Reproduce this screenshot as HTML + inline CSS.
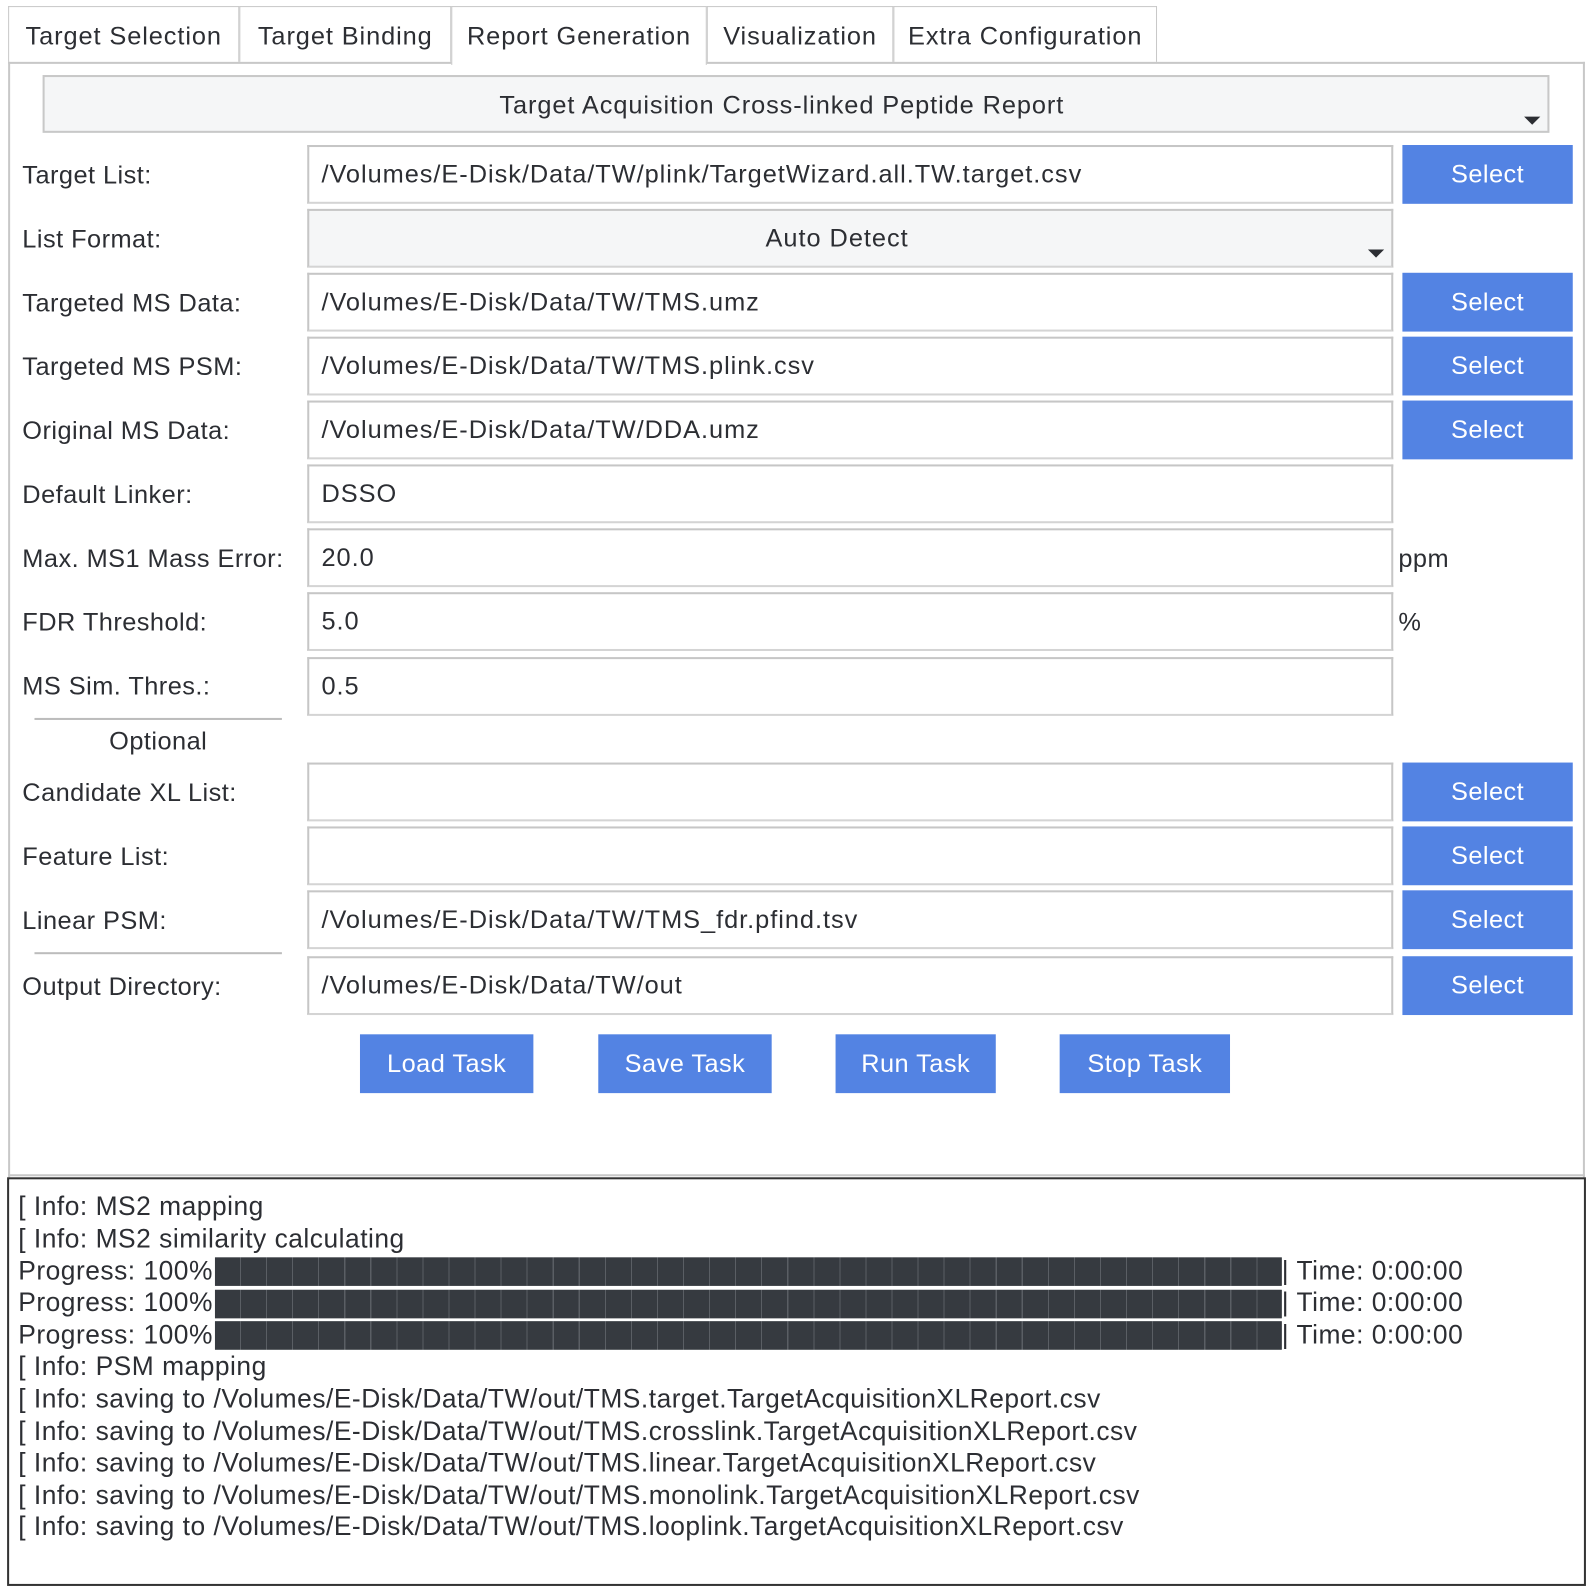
<!DOCTYPE html>
<html><head><meta charset="utf-8"><style>
html,body{margin:0;padding:0;background:#fff;width:1590px;height:1590px;overflow:hidden}
#w{position:absolute;left:0;top:0;width:1568px;height:1568px;transform:scale(1.01403);transform-origin:0 0;font-family:"Liberation Sans",sans-serif;color:#2c2e33;letter-spacing:0.45px}
.a{position:absolute}
.tab{position:absolute;top:6px;height:55px;border:1.5px solid #c8c8c8;border-bottom:none;background:#fff;font-size:25px;line-height:58px;text-align:center;box-sizing:border-box;letter-spacing:0.9px}
.lbl{position:absolute;left:22px;font-size:25px;line-height:30px}
.inp{position:absolute;left:303px;width:1071px;height:58px;box-sizing:border-box;border:2px solid #c6c6c6;border-bottom-color:#d4d4d4;background:#fff;font-size:25px;line-height:54px;padding-left:12px;letter-spacing:0.95px}
.btn{position:absolute;background:#5383e3;color:#fff;font-size:25px;text-align:center;height:58px;line-height:58px}
.sel{left:1383px;width:168px}
.arr{position:absolute;width:0;height:0;border-left:8px solid transparent;border-right:8px solid transparent;border-top:8px solid #2c2e33}
.lg{position:absolute;left:18px;font-size:26px;line-height:31.6px;white-space:pre;letter-spacing:0.5px}
.bar{position:absolute;left:212px;width:1052px;height:28px;background:#363a40;background-image:repeating-linear-gradient(90deg,#363a40 0,#363a40 24.6px,#5a5e64 24.6px,#5a5e64 25.7px)}
</style></head><body><div id="w">
<div class="tab" style="left:8px;width:228px">Target Selection</div>
<div class="tab" style="left:236px;width:209px">Target Binding</div>
<div class="tab" style="left:445px;width:252px;height:58px">Report Generation</div>
<div class="tab" style="left:697px;width:184px">Visualization</div>
<div class="tab" style="left:881px;width:260px">Extra Configuration</div>
<div class="a" style="left:8px;top:61px;width:437px;height:1.5px;background:#c8c8c8"></div>
<div class="a" style="left:697px;top:61px;width:866px;height:1.5px;background:#c8c8c8"></div>
<div class="a" style="left:8px;top:61px;width:1.5px;height:1100px;background:#c8c8c8"></div>
<div class="a" style="left:1561px;top:61px;width:1.5px;height:1100px;background:#c8c8c8"></div>
<div class="a" style="left:8px;top:1158px;width:1555px;height:2px;background:#c8c8c8"></div>

<div class="a" style="left:42px;top:74px;width:1486px;height:57px;box-sizing:border-box;border:2px solid #c8c8c8;background:#f5f6f7;font-size:25px;line-height:56px;text-align:center;letter-spacing:0.9px;padding-right:28px">Target Acquisition Cross-linked Peptide Report</div>
<div class="arr" style="left:1503px;top:115px"></div>

<div class="lbl" style="top:158px">Target List:</div>
<div class="inp" style="top:143px">/Volumes/E-Disk/Data/TW/plink/TargetWizard.all.TW.target.csv</div>
<div class="btn sel" style="top:143px">Select</div>

<div class="lbl" style="top:221px">List Format:</div>
<div class="inp" style="top:206px;background:#f5f6f7;text-align:center;padding:0 26px 0 0">Auto Detect</div>
<div class="arr" style="left:1349px;top:246px"></div>

<div class="lbl" style="top:284px">Targeted MS Data:</div>
<div class="inp" style="top:269px">/Volumes/E-Disk/Data/TW/TMS.umz</div>
<div class="btn sel" style="top:269px">Select</div>

<div class="lbl" style="top:347px">Targeted MS PSM:</div>
<div class="inp" style="top:332px">/Volumes/E-Disk/Data/TW/TMS.plink.csv</div>
<div class="btn sel" style="top:332px">Select</div>

<div class="lbl" style="top:410px">Original MS Data:</div>
<div class="inp" style="top:395px">/Volumes/E-Disk/Data/TW/DDA.umz</div>
<div class="btn sel" style="top:395px">Select</div>

<div class="lbl" style="top:473px">Default Linker:</div>
<div class="inp" style="top:458px">DSSO</div>

<div class="lbl" style="top:536px">Max. MS1 Mass Error:</div>
<div class="inp" style="top:521px">20.0</div>
<div class="lbl" style="left:1379px;top:536px">ppm</div>

<div class="lbl" style="top:599px">FDR Threshold:</div>
<div class="inp" style="top:584px">5.0</div>
<div class="lbl" style="left:1379px;top:599px">%</div>

<div class="lbl" style="top:662px">MS Sim. Thres.:</div>
<div class="inp" style="top:648px">0.5</div>

<div class="a" style="left:34px;top:708px;width:244px;height:1.5px;background:#bcbcbc"></div>
<div class="lbl" style="left:34px;width:244px;text-align:center;top:716px">Optional</div>

<div class="lbl" style="top:767px">Candidate XL List:</div>
<div class="inp" style="top:752px"></div>
<div class="btn sel" style="top:752px">Select</div>

<div class="lbl" style="top:830px">Feature List:</div>
<div class="inp" style="top:815px"></div>
<div class="btn sel" style="top:815px">Select</div>

<div class="lbl" style="top:893px">Linear PSM:</div>
<div class="inp" style="top:878px">/Volumes/E-Disk/Data/TW/TMS_fdr.pfind.tsv</div>
<div class="btn sel" style="top:878px">Select</div>

<div class="a" style="left:34px;top:939px;width:244px;height:1.5px;background:#bcbcbc"></div>

<div class="lbl" style="top:958px">Output Directory:</div>
<div class="inp" style="top:943px">/Volumes/E-Disk/Data/TW/out</div>
<div class="btn sel" style="top:943px">Select</div>

<div class="btn" style="left:355px;width:171px;top:1020px">Load Task</div>
<div class="btn" style="left:590px;width:171px;top:1020px">Save Task</div>
<div class="btn" style="left:824px;width:158px;top:1020px">Run Task</div>
<div class="btn" style="left:1045px;width:168px;top:1020px">Stop Task</div>

<div class="a" style="left:7px;top:1161px;width:1557px;height:403px;box-sizing:border-box;border:2px solid #333"></div>
<div class="lg" style="top:1174px">[ Info: MS2 mapping</div>
<div class="lg" style="top:1206px">[ Info: MS2 similarity calculating</div>
<div class="lg" style="top:1238px">Progress: 100%|</div>
<div class="bar" style="top:1240px"></div>
<div class="lg" style="left:1264px;top:1238px">| Time: 0:00:00</div>
<div class="lg" style="top:1269px">Progress: 100%|</div>
<div class="bar" style="top:1272px"></div>
<div class="lg" style="left:1264px;top:1269px">| Time: 0:00:00</div>
<div class="lg" style="top:1301px">Progress: 100%|</div>
<div class="bar" style="top:1303px"></div>
<div class="lg" style="left:1264px;top:1301px">| Time: 0:00:00</div>
<div class="lg" style="top:1332px">[ Info: PSM mapping</div>
<div class="lg" style="top:1364px">[ Info: saving to /Volumes/E-Disk/Data/TW/out/TMS.target.TargetAcquisitionXLReport.csv</div>
<div class="lg" style="top:1396px">[ Info: saving to /Volumes/E-Disk/Data/TW/out/TMS.crosslink.TargetAcquisitionXLReport.csv</div>
<div class="lg" style="top:1427px">[ Info: saving to /Volumes/E-Disk/Data/TW/out/TMS.linear.TargetAcquisitionXLReport.csv</div>
<div class="lg" style="top:1459px">[ Info: saving to /Volumes/E-Disk/Data/TW/out/TMS.monolink.TargetAcquisitionXLReport.csv</div>
<div class="lg" style="top:1490px">[ Info: saving to /Volumes/E-Disk/Data/TW/out/TMS.looplink.TargetAcquisitionXLReport.csv</div>
</div></body></html>
